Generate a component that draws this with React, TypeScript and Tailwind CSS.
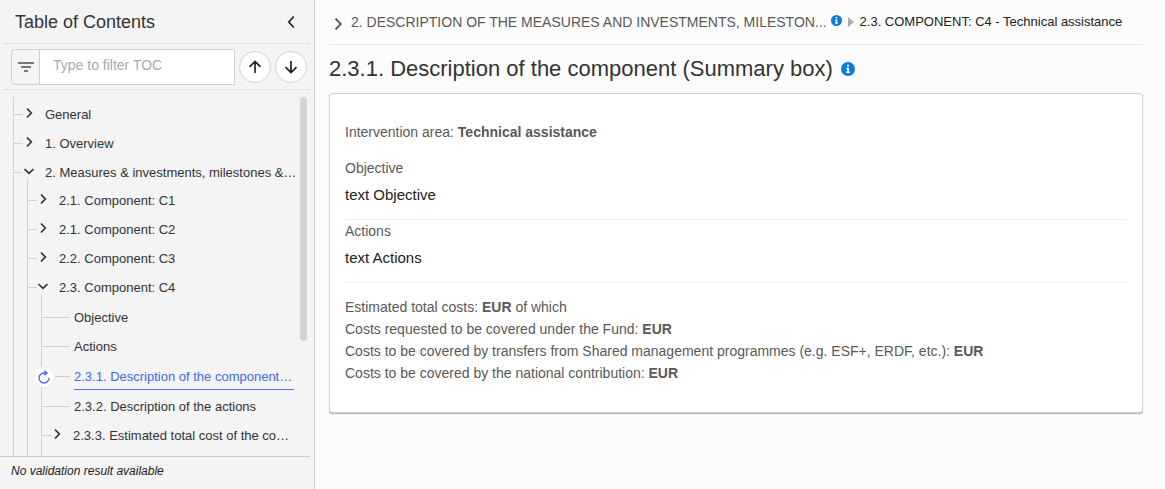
import { useState } from 'react';
import clsx from 'clsx';

interface TocNode {
  id: string;
  label: string;
  expandable?: boolean;
  children?: TocNode[];
}

const TOC: TocNode[] = [
  { id: 'general', label: 'General', expandable: true },
  { id: 'overview', label: '1. Overview', expandable: true },
  {
    id: 'measures',
    label: '2. Measures & investments, milestones &…',
    expandable: true,
    children: [
      { id: 'c1', label: '2.1. Component: C1', expandable: true },
      { id: 'c2', label: '2.1. Component: C2', expandable: true },
      { id: 'c3', label: '2.2. Component: C3', expandable: true },
      {
        id: 'c4',
        label: '2.3. Component: C4',
        expandable: true,
        children: [
          { id: 'objective', label: 'Objective' },
          { id: 'actions', label: 'Actions' },
          { id: 'summary', label: '2.3.1. Description of the component…' },
          { id: 'desc-actions', label: '2.3.2. Description of the actions' },
          { id: 'total-cost', label: '2.3.3. Estimated total cost of the co…', expandable: true },
        ],
      },
    ],
  },
];

function Chevron({ className }: { className?: string }) {
  return (
    <svg viewBox="0 0 12 12" className={clsx('size-3 fill-none stroke-[#333] stroke-[1.7]', className)}>
      <path d="M4 1.5 8.3 6 4 10.5" />
    </svg>
  );
}

function InfoIcon({ className }: { className: string }) {
  return (
    <svg viewBox="0 0 14 14" className={clsx('shrink-0', className)}>
      <circle cx="7" cy="7" r="7" fill="#0a7bdc" />
      <path d="M6 2.7h2v1.8H6zM5.2 5.7H8v3.9h.9V11H5.2V9.6H6V7.1h-.8z" fill="#fff" />
    </svg>
  );
}

function ReloadIcon() {
  return (
    <svg viewBox="0 0 14 14" className="size-[14px] fill-none stroke-[#4169e1] stroke-[1.3]">
      <path d="M9.3 3H7a5 5 0 1 0 5 5" />
      <path d="M7.4.7 10 3 7.4 5.3" />
    </svg>
  );
}

interface TocListProps {
  nodes: TocNode[];
  level: number;
  selected: string;
  onSelect: (id: string) => void;
}

function TocList({ nodes, level, selected, onSelect }: TocListProps) {
  const [closed, setClosed] = useState<Record<string, boolean>>({});

  return (
    <ul
      className={clsx(
        'ml-[13px] border-l border-[#d0d0d0]',
        level === 0 && 'pt-[3px]',
        level === 1 && '-mt-2 pt-[7px]',
        level === 2 && '-mt-[7px] pt-2 pb-2',
      )}
    >
      {nodes.map((node) => {
        const active = node.id === selected;
        const open = !!node.children && !closed[node.id];
        return (
          <li key={node.id}>
            <div className={clsx('relative flex items-center', active ? 'h-[31px]' : 'h-[29px]')}>
              {/* Connector */}
              <span className={clsx('h-px shrink-0 bg-[#d0d0d0]', node.expandable ? 'w-[9px]' : 'w-7')} />
              {node.expandable && (
                <button
                  aria-label={`Toggle ${node.label}`}
                  onClick={() => setClosed((prev) => ({ ...prev, [node.id]: open }))}
                  className="mb-1 shrink-0 cursor-pointer"
                >
                  <Chevron className={open ? 'rotate-90' : undefined} />
                </button>
              )}
              {active && (
                <span className="absolute -left-[9px] flex size-[22px] items-center justify-center rounded-full border border-[#ececec] bg-white">
                  <ReloadIcon />
                </span>
              )}
              <a
                href={`#${node.id}`}
                onClick={() => onSelect(node.id)}
                className={clsx(
                  'min-w-0 truncate text-[13px] leading-[25px]',
                  node.expandable ? 'ml-[10px]' : 'ml-1',
                  active ? 'mr-1 flex-1 border-b border-b-[#4a78e8] text-[#4169e1]' : 'text-[#333]',
                )}
              >
                {node.label}
              </a>
            </div>
            {open && node.children && (
              <TocList nodes={node.children} level={level + 1} selected={selected} onSelect={onSelect} />
            )}
          </li>
        );
      })}
    </ul>
  );
}

const ROUND_BUTTON =
  'flex size-8 shrink-0 cursor-pointer items-center justify-center rounded-full border border-[#d4d4d4] bg-white';

function Sidebar() {
  const [selected, setSelected] = useState('summary');

  return (
    <aside className="flex w-[315px] shrink-0 flex-col border-r border-[#d4d4d4] bg-[#f4f4f4] pr-1">
      <div className="ml-1 flex h-11 items-center justify-between border-b border-dotted border-[#d0d0d0] pr-3 pl-[11px]">
        <h2 className="text-lg text-[#333]">Table of Contents</h2>
        <button aria-label="Collapse" className="cursor-pointer">
          <svg viewBox="0 0 14 14" className="size-[14px] fill-none stroke-[#222] stroke-[1.7]">
            <path d="M9.8 1.5 4.8 7l5 5.5" />
          </svg>
        </button>
      </div>

      {/* Filter */}
      <div className="ml-1 flex h-[46px] items-center gap-1 border-b border-dotted border-[#d0d0d0] pr-[3px] pl-[7px]">
        <label className="flex h-9 min-w-0 flex-1 rounded-l-sm border border-[#d0d0d0]">
          <span className="flex w-7 items-center justify-center border-r border-[#d0d0d0]">
            <svg viewBox="0 0 16 10" className="h-[10px] w-4 stroke-[#777] stroke-2">
              <path d="M0 1h16M3 5h10M6 9h4" />
            </svg>
          </span>
          <input
            type="text"
            aria-label="Filter table of contents"
            placeholder="Type to filter TOC"
            className="min-w-0 flex-1 bg-white px-[13px] pb-1 text-sm text-[#333] outline-none placeholder:text-[#aaa]"
          />
        </label>
        <button aria-label="Previous" className={ROUND_BUTTON}>
          <svg viewBox="0 0 14 14" className="size-[14px] fill-none stroke-[#222] stroke-[1.7]">
            <path d="M7 13V1.5M1.5 6.8 7 1.4l5.5 5.4" />
          </svg>
        </button>
        <button aria-label="Next" className={ROUND_BUTTON}>
          <svg viewBox="0 0 14 14" className="size-[14px] fill-none stroke-[#222] stroke-[1.7]">
            <path d="M7 1v11.5M1.5 7.2 7 12.6l5.5-5.4" />
          </svg>
        </button>
      </div>

      {/* Tree */}
      <div className="flex min-h-0 flex-1 gap-[2px] pt-[7px] pr-[3px]">
        <nav className="min-w-0 flex-1 overflow-y-auto [scrollbar-width:none]">
          <TocList nodes={TOC} level={0} selected={selected} onSelect={setSelected} />
        </nav>
        <div className="h-[68%] w-[7px] rounded-full bg-[#d4d4d4]" />
      </div>

      <div className="h-[33px] border-t border-[#d0d0d0] pt-[5px] pl-[11px] text-xs leading-[18px] text-[#222] italic">
        No validation result available
      </div>
    </aside>
  );
}

interface Cost {
  label: string;
  suffix?: string;
}

const COSTS: Cost[] = [
  { label: 'Estimated total costs:', suffix: 'of which' },
  { label: 'Costs requested to be covered under the Fund:' },
  { label: 'Costs to be covered by transfers from Shared management programmes (e.g. ESF+, ERDF, etc.):' },
  { label: 'Costs to be covered by the national contribution:' },
];

function Field({ label, value }: { label: string; value: string }) {
  return (
    <div className="border-b border-[#f0f0f0] pb-3">
      <dt className="leading-[22px] text-[#595959]">{label}</dt>
      <dd className="pt-1 text-[15px] leading-6 text-[#222]">{value}</dd>
    </div>
  );
}

export default function App() {
  return (
    <div className="flex h-screen bg-[#fcfcfc] font-['Liberation_Sans',Arial,sans-serif] text-sm">
      <Sidebar />

      <main className="min-w-0 flex-1 overflow-y-auto border-r border-[#d4d4d4] pr-[22px] pl-[14px]">
        <nav className="flex h-[45px] items-center border-b border-[#e6e6e6] whitespace-nowrap">
          <svg viewBox="0 0 12 12" className="mt-1 ml-[3px] size-3 shrink-0 fill-none stroke-[#444] stroke-[1.7]">
            <path d="M3.5.7 8.7 6l-5.2 5.3" />
          </svg>
          <a href="#measures" className="ml-[7px] text-[#595959]">
            2. DESCRIPTION OF THE MEASURES AND INVESTMENTS, MILESTON...
          </a>
          <InfoIcon className="mb-[3px] ml-1 size-[11px]" />
          <svg viewBox="0 0 6 10" className="ml-[6px] h-[10px] w-[6px] shrink-0 fill-[#aaa]">
            <path d="M0 0l6 5-6 5z" />
          </svg>
          <a href="#c4" className="ml-[6px] text-[13px] text-[#222]">
            2.3. COMPONENT: C4 - Technical assistance
          </a>
        </nav>

        <h1 className="flex h-12 items-center gap-2 text-[22px] text-[#333]">
          2.3.1. Description of the component (Summary box)
          <InfoIcon className="size-[14px]" />
        </h1>

        <section className="rounded-[3px] border border-[#d0d0d0] bg-white px-[15px] pt-[27px] pb-7 shadow-[0_1px_1px_rgba(0,0,0,0.3)]">
          <p className="pb-[14px] leading-[22px] text-[#595959]">
            Intervention area: <b>Technical assistance</b>
          </p>
          <dl>
            <Field label="Objective" value="text Objective" />
            <Field label="Actions" value="text Actions" />
          </dl>
          <ul className="pt-[13px] leading-[22px] text-[#595959]">
            {COSTS.map((cost) => (
              <li key={cost.label}>
                {cost.label} <b>EUR</b> {cost.suffix}
              </li>
            ))}
          </ul>
        </section>
      </main>
    </div>
  );
}
